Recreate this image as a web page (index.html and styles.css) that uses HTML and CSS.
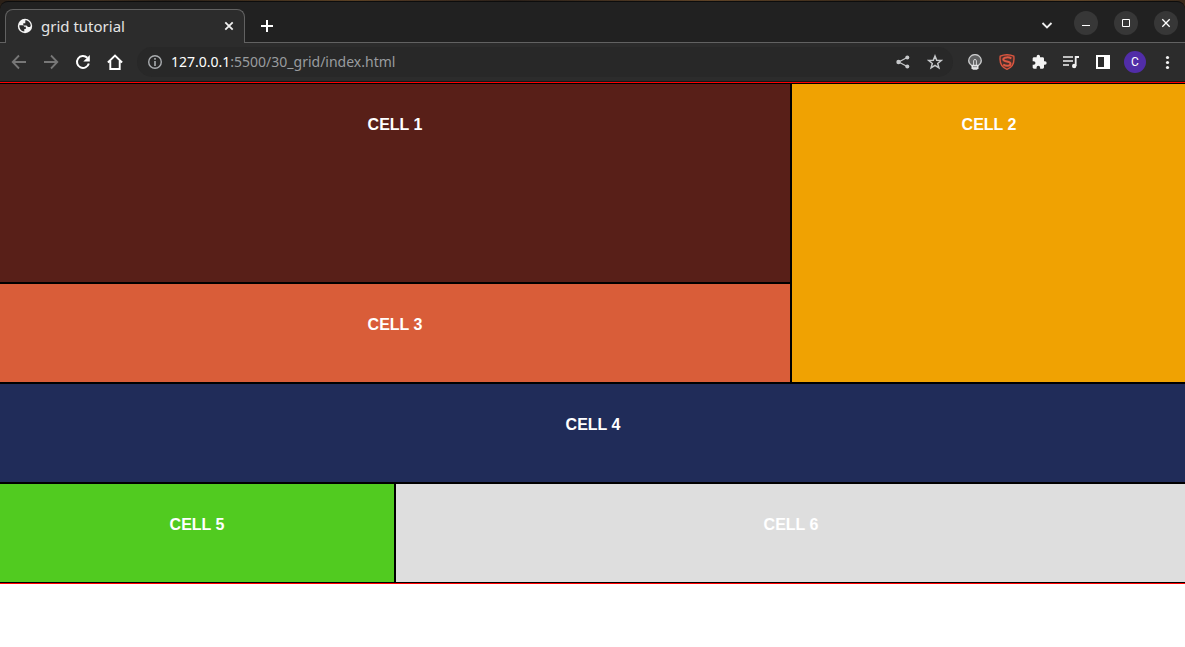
FILE: index.html
```html
<!DOCTYPE html>
<html lang="en">
<head>
<meta charset="utf-8">
<title>grid tutorial</title>
<link rel="stylesheet" href="styles.css">
</head>
<body>
<header class="browser">
  <div class="tabstrip">
    <div class="tab">
      <svg class="globe" width="16" height="16" viewBox="0 0 16 16"><circle cx="8" cy="8" r="7.200" fill="#f4f4f4"/><path d="M2.300 7.300h3.200q1.500 0 1.700 1.500h1.600v2.200H7.300v2.600C4.500 13.300 2.200 11 2.300 7.300z M8.300 2.300c3 0 5.500 2.500 5.400 5.600-.6 1.200-2 1.500-3 .9L9.500 7.400H6.300V5.200h2z" fill="#2c2c2c"/></svg>
      <span class="tab-title">grid tutorial</span>
      <button class="tab-close" aria-label="Close tab"><svg width="16" height="16" viewBox="0 0 16 16"><path d="M4.300 4.300l7.400 7.400M11.700 4.300l-7.400 7.400" stroke="#f0f0f0" stroke-width="1.800"/></svg></button>
    </div>
    <button class="new-tab" aria-label="New tab"><svg width="16" height="16" viewBox="0 0 16 16"><path d="M8 2v12M2 8h12" stroke="#fff" stroke-width="2"/></svg></button>
    <div class="window-controls">
      <button class="chevron" aria-label="Search tabs"><svg width="14" height="14" viewBox="0 0 14 14"><path d="M2.500 5l4.500 4.500L11.500 5" fill="none" stroke="#eee" stroke-width="1.800"/></svg></button>
      <button class="win" aria-label="Minimize"><svg width="14" height="14" viewBox="0 0 14 14"><path d="M3 9.500h8" stroke="#fff"/></svg></button>
      <button class="win" aria-label="Maximize"><svg width="14" height="14" viewBox="0 0 14 14"><path d="M3.500 3.500h7v7h-7z" fill="none" stroke="#fff"/></svg></button>
      <button class="win" aria-label="Close"><svg width="14" height="14" viewBox="0 0 14 14"><path d="M3.300 3.300l7.400 7.400M10.700 3.300l-7.400 7.400" stroke="#fff" stroke-width="1.300"/></svg></button>
    </div>
  </div>
  <div class="toolbar">
    <nav class="nav">
      <button aria-label="Back"><svg width="16" height="16" viewBox="0 0 16 16"><path d="M15 8H2M8 1.500L1.700 8 8 14.500" fill="none" stroke="#777" stroke-width="1.800"/></svg></button>
      <button aria-label="Forward"><svg width="16" height="16" viewBox="0 0 16 16"><path d="M1 8h13M8 1.500L14.300 8 8 14.500" fill="none" stroke="#777" stroke-width="1.800"/></svg></button>
      <button aria-label="Reload"><svg width="16" height="16" viewBox="0 0 16 16"><path d="M13.800 9.500A6 6 0 1 1 12.300 3.800" fill="none" stroke="#fff" stroke-width="2"/><path d="M14.800 1v6.500H8.300z" fill="#fff"/></svg></button>
      <button aria-label="Home"><svg width="16" height="16" viewBox="0 0 16 16"><path d="M.9 8.500L8 1.500l7.100 7M3.300 7v8h9.400V7" fill="none" stroke="#fff" stroke-width="1.900"/></svg></button>
    </nav>
    <div class="address">
      <svg class="info" width="16" height="16" viewBox="0 0 16 16"><circle cx="8" cy="8" r="6.300" fill="none" stroke="#aaadb0" stroke-width="1.400"/><path d="M8 7v5M8 4v1.700" stroke="#aaadb0" stroke-width="1.600"/></svg>
      <div class="url"><span class="host">127.0.0.1</span>:5500/30_grid/index.html</div>
      <button aria-label="Share"><svg width="16" height="16" viewBox="0 0 16 16"><path d="M12.200 3.500L3.700 8l8.500 4.500" fill="none" stroke="#c6c8ca" stroke-width="1.300"/><g fill="#c6c8ca"><circle cx="12.300" cy="3.500" r="2"/><circle cx="3.500" cy="8" r="2.200"/><circle cx="12.300" cy="12.500" r="2"/></g></svg></button>
      <button aria-label="Bookmark"><svg width="16" height="16" viewBox="0 0 16 16"><path d="M8 2l1.700 4.200 4.500.3-3.500 2.900 1.200 4.400L8 11.300l-3.900 2.500 1.200-4.400-3.500-2.900 4.500-.3z" fill="none" stroke="#c6c8ca" stroke-width="1.500"/></svg></button>
    </div>
    <div class="extensions">
      <button aria-label="Bulb extension"><svg width="16" height="16" viewBox="0 0 16 16"><path d="M4.700 11.500C2.700 10.300 1.700 8.600 1.700 6.600a6.300 6 0 0 1 12.600 0c0 2-1 3.700-3 4.900z" fill="#606162" stroke="#c9cacb" stroke-width="1.300"/><path d="M6.600 11V6.800a1.400 1.300 0 0 1 2.800 0V11" fill="none" stroke="#d6d7d8" stroke-width="1"/><path d="M4.500 11h7v3.200l-1.500 1.500H6l-1.500-1.500z" fill="#e2e3e4"/><path d="M6 12.700h4" stroke="#8b8c8d" stroke-width="1"/></svg></button>
      <button aria-label="Shield extension"><svg width="16" height="16" viewBox="0 0 16 16"><path d="M1.200 2.200Q8-.8 14.800 2.200C15.700 9 13 13.500 8 15.300 3 13.500.3 9 1.200 2.200z" fill="#4a302c" stroke="#d9553f" stroke-width="1.400"/><path d="M12.300 4.500C10.500 3 4.300 2.700 4.300 5.500 4.300 8.300 11.500 6.800 11.500 9.700c0 2.700-5 2.600-7.300.8" fill="none" stroke="#de5943" stroke-width="2"/></svg></button>
      <button aria-label="Extensions"><svg width="16" height="16" viewBox="0 0 24 24"><path d="M21 11h-1.500V7c0-1.100-.9-2-2-2h-4V3.500a2.500 2.500 0 0 0-5 0V5h-4c-1.100 0-2 .9-2 2v3.800H4a2.700 2.700 0 0 1 0 5.400H2.500V20c0 1.100.9 2 2 2h3.800v-1.500a2.700 2.700 0 0 1 5.400 0V22h3.800c1.100 0 2-.9 2-2v-4H21a2.500 2.500 0 0 0 0-5z" fill="#f4f4f4"/></svg></button>
      <button aria-label="Media"><svg width="16" height="16" viewBox="0 0 16 16"><path d="M0 3h10M0 7h10M0 11h6" stroke="#f2f2f2" stroke-width="1.600"/><path d="M12.700 12V3H16" fill="none" stroke="#f2f2f2" stroke-width="1.800"/><circle cx="11.200" cy="12" r="2.200" fill="#f2f2f2"/></svg></button>
      <button aria-label="Side panel"><svg width="16" height="16" viewBox="0 0 16 16"><path d="M1 1h14v14H1zM3 3v10h6V3z" fill="#fff" fill-rule="evenodd"/></svg></button>
      <button class="avatar" aria-label="Profile">C</button>
      <button aria-label="Menu"><svg width="16" height="16" viewBox="0 0 16 16"><g fill="#f4f4f4"><circle cx="8.500" cy="3.500" r="1.600"/><circle cx="8.500" cy="8.500" r="1.600"/><circle cx="8.500" cy="13.500" r="1.600"/></g></svg></button>
    </div>
  </div>
</header>
<main class="grid">
  <div class="cell cell-1">CELL 1</div>
  <div class="cell cell-2">CELL 2</div>
  <div class="cell cell-3">CELL 3</div>
  <div class="cell cell-4">CELL 4</div>
  <div class="cell cell-5">CELL 5</div>
  <div class="cell cell-6">CELL 6</div>
</main>
</body>
</html>
```

FILE: styles.css
```css
* { box-sizing: border-box; }

body {
  margin: 0;
  background: #fff;
  font-family: "Liberation Sans", Arial, sans-serif;
  overflow-x: hidden;
}

button {
  display: flex;
  align-items: center;
  justify-content: center;
  flex: none;
  width: 16px;
  height: 16px;
  padding: 0;
  border: 0;
  background: none;
}

svg { display: block; flex: none; }

.browser {
  padding-top: 1px;
  background: linear-gradient(90deg, #2b2017, #403020 8%, #2a2119 14%, #5b4124 30%, #4b3522 34%, #2b211a 43%, #5e4327 60%, #352719 74%, #624729 90%, #3a2a1b);
  border-bottom: 1px solid #161616;
  font-family: "Noto Sans", sans-serif;
}

.tabstrip {
  display: flex;
  align-items: center;
  height: 42px;
  padding: 7px 7px 0 5px;
  border-top: 1px solid #0d0d0d;
  border-bottom: 1px solid #626262;
  border-radius: 8px 8px 0 0;
  background: #212121;
}

.tab {
  display: flex;
  align-items: center;
  align-self: stretch;
  width: 240px;
  margin-bottom: -1px;
  padding: 0 7px 1px 11px;
  border: 1px solid #626262;
  border-bottom: 0;
  border-radius: 8px 8px 0 0;
  background: #2c2c2c;
}

.tab-title {
  flex: 1;
  margin-left: 8px;
  color: #e4e4e4;
  font-size: 15px;
  line-height: 20px;
}

.new-tab { margin-left: 14px; }

.window-controls {
  display: flex;
  align-items: center;
  gap: 16px;
  margin: 0 0 5px auto;
}

.chevron { margin: 4px 3px 0 0; }

.win {
  width: 24px;
  height: 24px;
  border-radius: 50%;
  background: #373737;
}

.toolbar {
  display: flex;
  align-items: center;
  height: 38px;
  padding: 0 10px 0 11px;
  background: #2c2c2c;
}

.nav, .extensions {
  display: flex;
  align-items: center;
  gap: 16px;
}

.address {
  display: flex;
  align-items: center;
  flex: 1;
  gap: 16px;
  height: 30px;
  margin: 0 14px;
  padding: 0 10px;
  border-radius: 15px;
  background: #282828;
}

.info { margin-right: -8px; }

.url {
  flex: 1;
  color: #999c9f;
  font-size: 14px;
  line-height: 20px;
}

.host { color: #fff; }

.avatar {
  width: 22px;
  height: 22px;
  margin: 0 -3px;
  border-radius: 50%;
  background: #512da8;
  color: #fff;
  font-family: Roboto, sans-serif;
  font-size: 12px;
}

.grid {
  display: grid;
  grid-template-columns: repeat(3, 1fr);
  grid-template-rows: 200px repeat(3, 100px);
  margin: 0 -2px 0 -1px;
  border-top: 1px solid #f00;
  border-bottom: 1px solid #f00;
}

.cell {
  padding: 32px 20px;
  border: 1px solid #000;
  color: #fff;
  font-size: 16px;
  font-weight: bold;
  line-height: 18px;
  text-align: center;
}

.cell-1 { grid-column: 1 / 3; background: #581f18; }
.cell-2 { grid-column: 3; grid-row: 1 / 3; background: #f0a202; }
.cell-3 { grid-column: 1 / 3; background: #d95d39; }
.cell-4 { grid-column: 1 / 4; background: #202c59; }
.cell-5 { background: #51cb20; }
.cell-6 { grid-column: 2 / 4; background: #dedede; }
```
